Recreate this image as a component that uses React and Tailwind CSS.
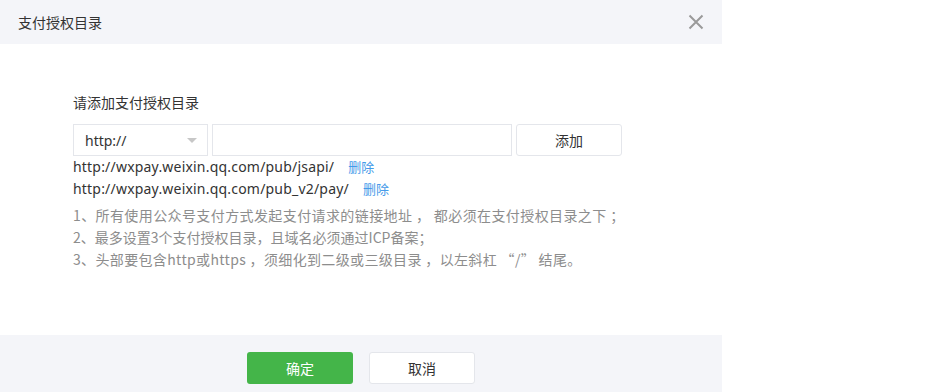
import React from 'react';

const FONT = { fontFamily: '"Noto Sans", "Noto Sans CJK SC", sans-serif' };
const CJK = { fontFamily: '"Noto Sans CJK SC", "Noto Sans", sans-serif' };

const URLS = [
  { url: 'http://wxpay.weixin.qq.com/pub/jsapi/' },
  { url: 'http://wxpay.weixin.qq.com/pub_v2/pay/' },
];

const NOTES = [
  { text: '1、所有使用公众号支付方式发起支付请求的链接地址 ， 都必须在支付授权目录之下 ；', cls: 'tracking-[0.4px]' },
  { text: '2、最多设置3个支付授权目录，且域名必须通过ICP备案；', cls: '' },
  { text: '3、头部要包含http或https ，须细化到二级或三级目录 ，以左斜杠 “/” 结尾。', cls: 'tracking-[0.35px]' },
];

export default function App() {
  return (
    <div className="w-[950px] h-[392px] bg-white overflow-hidden" style={FONT}>
      <div className="w-[722px] h-full flex flex-col bg-white">
        {/* header */}
        <div className="h-[44px] shrink-0 bg-[#f4f5f9] flex items-center justify-between pl-[18px] pr-[18px]">
          <span className="text-[14px] text-[#333]">支付授权目录</span>
          <svg width="16" height="16" viewBox="0 0 16 16" className="text-[#9a9a9a]">
            <path d="M1.5 1.5 L14.5 14.5 M14.5 1.5 L1.5 14.5" stroke="currentColor" strokeWidth="2" fill="none" />
          </svg>
        </div>

        {/* body */}
        <div className="flex-1 pl-[73px] pt-[49px]">
          <div className="text-[14px] leading-[20px] text-[#333] mb-[11px]">请添加支付授权目录</div>
          <div className="flex items-center gap-[4px]">
            <div className="w-[135px] h-[32px] border border-[#e4e6eb] bg-white flex items-center justify-between pl-[11px] pr-[10px]">
              <span className="text-[14px] text-[#333]">http://</span>
              <span className="w-0 h-0 border-l-[5px] border-r-[5px] border-t-[5px] border-l-transparent border-r-transparent border-t-[#c7c7c7]" />
            </div>
            <div className="w-[300px] h-[32px] border border-[#e4e6eb] bg-white" />
            <button className="w-[106px] h-[32px] border border-[#e4e6eb] rounded-[3px] bg-white text-[14px] text-[#333]">
              添加
            </button>
          </div>
          <div>
            {URLS.map((u) => (
              <div key={u.url} className="text-[14px] leading-[22px] text-[#333] flex">
                <span className="tracking-[0.2px]">{u.url}</span>
                <span className="ml-[14px] text-[13px] text-[#459ae9]">删除</span>
              </div>
            ))}
          </div>
          <div className="mt-[4px]" style={CJK}>
            {NOTES.map((n) => (
              <div key={n.text} className={`text-[14px] leading-[22px] text-[#8d8d8d] whitespace-pre ${n.cls}`}>{n.text}</div>
            ))}
          </div>
        </div>

        {/* footer */}
        <div className="h-[57px] shrink-0 bg-[#f4f5f9] flex justify-center items-start pt-[17px] gap-[16px]">
          <button className="w-[106px] h-[32px] rounded-[3px] bg-[#44b549] text-white text-[14px]">确定</button>
          <button className="w-[106px] h-[32px] rounded-[3px] bg-white border border-[#e4e6eb] text-[#333] text-[14px]">取消</button>
        </div>
      </div>
    </div>
  );
}
